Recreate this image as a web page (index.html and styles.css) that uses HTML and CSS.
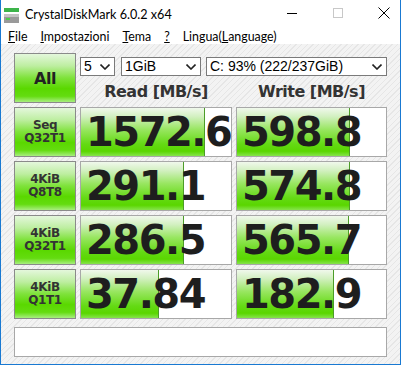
FILE: index.html
```html
<!DOCTYPE html>
<html lang="it">
<head>
    <meta charset="UTF-8">
    <title>CrystalDiskMark 6.0.2 x64</title>
    <link rel="stylesheet" href="styles.css">
</head>
<body>

<div class="window">
    <div class="titlebar">
        <svg class="app-icon" width="16" height="16" viewBox="0 0 16 16">
            <rect x="0" y="0" width="15" height="4" fill="#3cb44a"/>
            <rect x="0" y="6" width="15" height="9" fill="#9a9a9a"/>
            <rect x="0" y="6" width="15" height="3" fill="#c4c4c4"/>
            <rect x="2" y="10" width="4" height="2" fill="#4cd04a"/>
        </svg>
        <span class="title">CrystalDiskMark 6.0.2 x64</span>
        <div class="controls">
            <svg width="46" height="30" viewBox="0 0 46 30"><line x1="18" y1="13.5" x2="28" y2="13.5" stroke="#000" stroke-width="1"/></svg>
            <svg width="46" height="30" viewBox="0 0 46 30"><rect x="18.5" y="8.5" width="9" height="9" fill="none" stroke="#c8c8c8" stroke-width="1"/></svg>
            <svg width="46" height="30" viewBox="0 0 46 30"><path d="M17.5 7.5 L28.5 18.5 M28.5 7.5 L17.5 18.5" stroke="#000" stroke-width="1"/></svg>
        </div>
    </div>

    <div class="menubar">
        <span><u>F</u>ile</span>
        <span><u>I</u>mpostazioni</span>
        <span><u>T</u>ema</span>
        <span><u>?</u></span>
        <span>Lingua(<u>L</u>anguage)</span>
    </div>

    <div class="client">
        <div class="grid">
            <button class="btn all">All</button>
            <div class="top">
                <div class="combos">
                    <div class="combo c-count">5<svg class="chev" width="10" height="6" viewBox="0 0 10 6"><path d="M0.5 0.5 L5 5 L9.5 0.5" fill="none" stroke="#222" stroke-width="1.6"/></svg></div>
                    <div class="combo c-size">1GiB<svg class="chev" width="10" height="6" viewBox="0 0 10 6"><path d="M0.5 0.5 L5 5 L9.5 0.5" fill="none" stroke="#222" stroke-width="1.6"/></svg></div>
                    <div class="combo c-drive">C: 93% (222/237GiB)<svg class="chev" width="10" height="6" viewBox="0 0 10 6"><path d="M0.5 0.5 L5 5 L9.5 0.5" fill="none" stroke="#222" stroke-width="1.6"/></svg></div>
                </div>
                <div class="heads">
                    <div class="head">Read [MB/s]</div>
                    <div class="head">Write [MB/s]</div>
                </div>
            </div>

            <button class="btn test">Seq<br>Q32T1</button>
            <div class="cell"><div class="fill" style="width: 82%"></div><span class="num">1572.6</span></div>
            <div class="cell"><div class="fill" style="width: 75%"></div><span class="num">598.8</span></div>

            <button class="btn test">4KiB<br>Q8T8</button>
            <div class="cell"><div class="fill" style="width: 68%"></div><span class="num">291.1</span></div>
            <div class="cell"><div class="fill" style="width: 75%"></div><span class="num">574.8</span></div>

            <button class="btn test">4KiB<br>Q32T1</button>
            <div class="cell"><div class="fill" style="width: 68%"></div><span class="num">286.5</span></div>
            <div class="cell"><div class="fill" style="width: 74.5%"></div><span class="num">565.7</span></div>

            <button class="btn test">4KiB<br>Q1T1</button>
            <div class="cell"><div class="fill" style="width: 51%"></div><span class="num">37.84</span></div>
            <div class="cell"><div class="fill" style="width: 64.5%"></div><span class="num">182.9</span></div>
        </div>
        <div class="comment"></div>
    </div>
</div>

</body>
</html>
```

FILE: styles.css
```css
body {
    margin: 0;
    padding: 0;
    background-color: white;
}

.window {
    box-sizing: border-box;
    width: 401px;
    height: 365px;
    border: 1px solid #1979d2;
    border-top: none;
    background-color: white;
    display: flex;
    flex-direction: column;
}

.titlebar {
    height: 30px;
    display: flex;
    align-items: center;
    font-family: Lato, "Liberation Sans", sans-serif;
    font-size: 12.6px;
    color: #000;
}

.app-icon {
    margin-left: 3px;
    margin-top: 2px;
}

.title {
    margin-left: 5px;
    margin-top: -1px;
}

.controls {
    margin-left: auto;
    display: flex;
    margin-right: -7px;
}

.menubar {
    box-sizing: border-box;
    height: 14px;
    display: flex;
    gap: 13px;
    padding-left: 7px;
    padding-top: 2px;
    font-family: Lato, "Liberation Sans", sans-serif;
    font-size: 12.4px;
    line-height: 10px;
    color: #000;
}

.client {
    flex: 1;
    padding: 9px 13px 0 13px;
    background-color: #f0f0f0;
    background-image: repeating-linear-gradient(-45deg, #f3f3f3 0px, #f3f3f3 3px, #e6e6e6 3px, #e6e6e6 4px);
}

.grid {
    display: grid;
    grid-template-columns: 62px 152px 151px;
    grid-auto-rows: 50px;
    gap: 4px;
}

.btn {
    box-sizing: border-box;
    margin: 0;
    padding: 0;
    border: 1px solid #8a8a8a;
    background: linear-gradient(to bottom, #e4f7dc 0%, #bdeea0 25%, #7ee23a 50%, #5ad800 72%, #64dc10 88%, #a8ee80 100%);
    color: #2a2a2a;
    font-family: "DejaVu Sans", sans-serif;
    font-weight: bold;
    cursor: pointer;
}

.btn.all {
    font-size: 16px;
    letter-spacing: -0.5px;
    color: #222;
}

.btn.test {
    font-size: 12px;
    line-height: 13px;
    letter-spacing: -0.4px;
    color: #333;
}

.top {
    grid-column: 2 / 4;
    display: flex;
    flex-direction: column;
}

.combos {
    display: flex;
    margin-top: 4px;
    height: 19px;
}

.combo {
    box-sizing: border-box;
    height: 19px;
    border: 1px solid #7a7a7a;
    background-color: white;
    font-family: "Liberation Sans", Arial, sans-serif;
    font-size: 14px;
    line-height: 17px;
    padding-left: 3px;
    color: #000;
    display: flex;
    align-items: center;
}

.combo .chev {
    margin-left: auto;
    margin-right: 4px;
}

.c-count {
    width: 35px;
}

.c-size {
    width: 80px;
    margin-left: 6px;
}

.c-drive {
    width: 181px;
    margin-left: 5px;
}

.heads {
    display: grid;
    grid-template-columns: 152px 151px;
    gap: 4px;
}

.head {
    text-align: center;
    font-family: "DejaVu Sans", sans-serif;
    font-weight: bold;
    font-size: 16px;
    letter-spacing: -0.5px;
    line-height: 32px;
    color: #333;
}

.cell {
    position: relative;
    box-sizing: border-box;
    border: 1px solid #a8a8a8;
    background-color: white;
    display: flex;
    align-items: center;
    overflow: hidden;
}

.fill {
    position: absolute;
    left: 0;
    top: 0;
    bottom: 0;
    border-right: 1px solid #4c9c28;
    background: linear-gradient(to bottom, #f0f8ec 0%, #d2f0c0 18%, #98e660 45%, #64da14 75%, #5ad600 90%, #86e44c 100%);
}

.num {
    position: relative;
    padding-left: 5px;
    font-family: "DejaVu Sans", sans-serif;
    font-weight: bold;
    font-size: 40px;
    letter-spacing: -1.5px;
    line-height: 40px;
    color: #1e1e1e;
}

.comment {
    margin-top: 8px;
    height: 30px;
    box-sizing: border-box;
    border: 1px solid #a8a8a8;
    background-color: white;
}
```
